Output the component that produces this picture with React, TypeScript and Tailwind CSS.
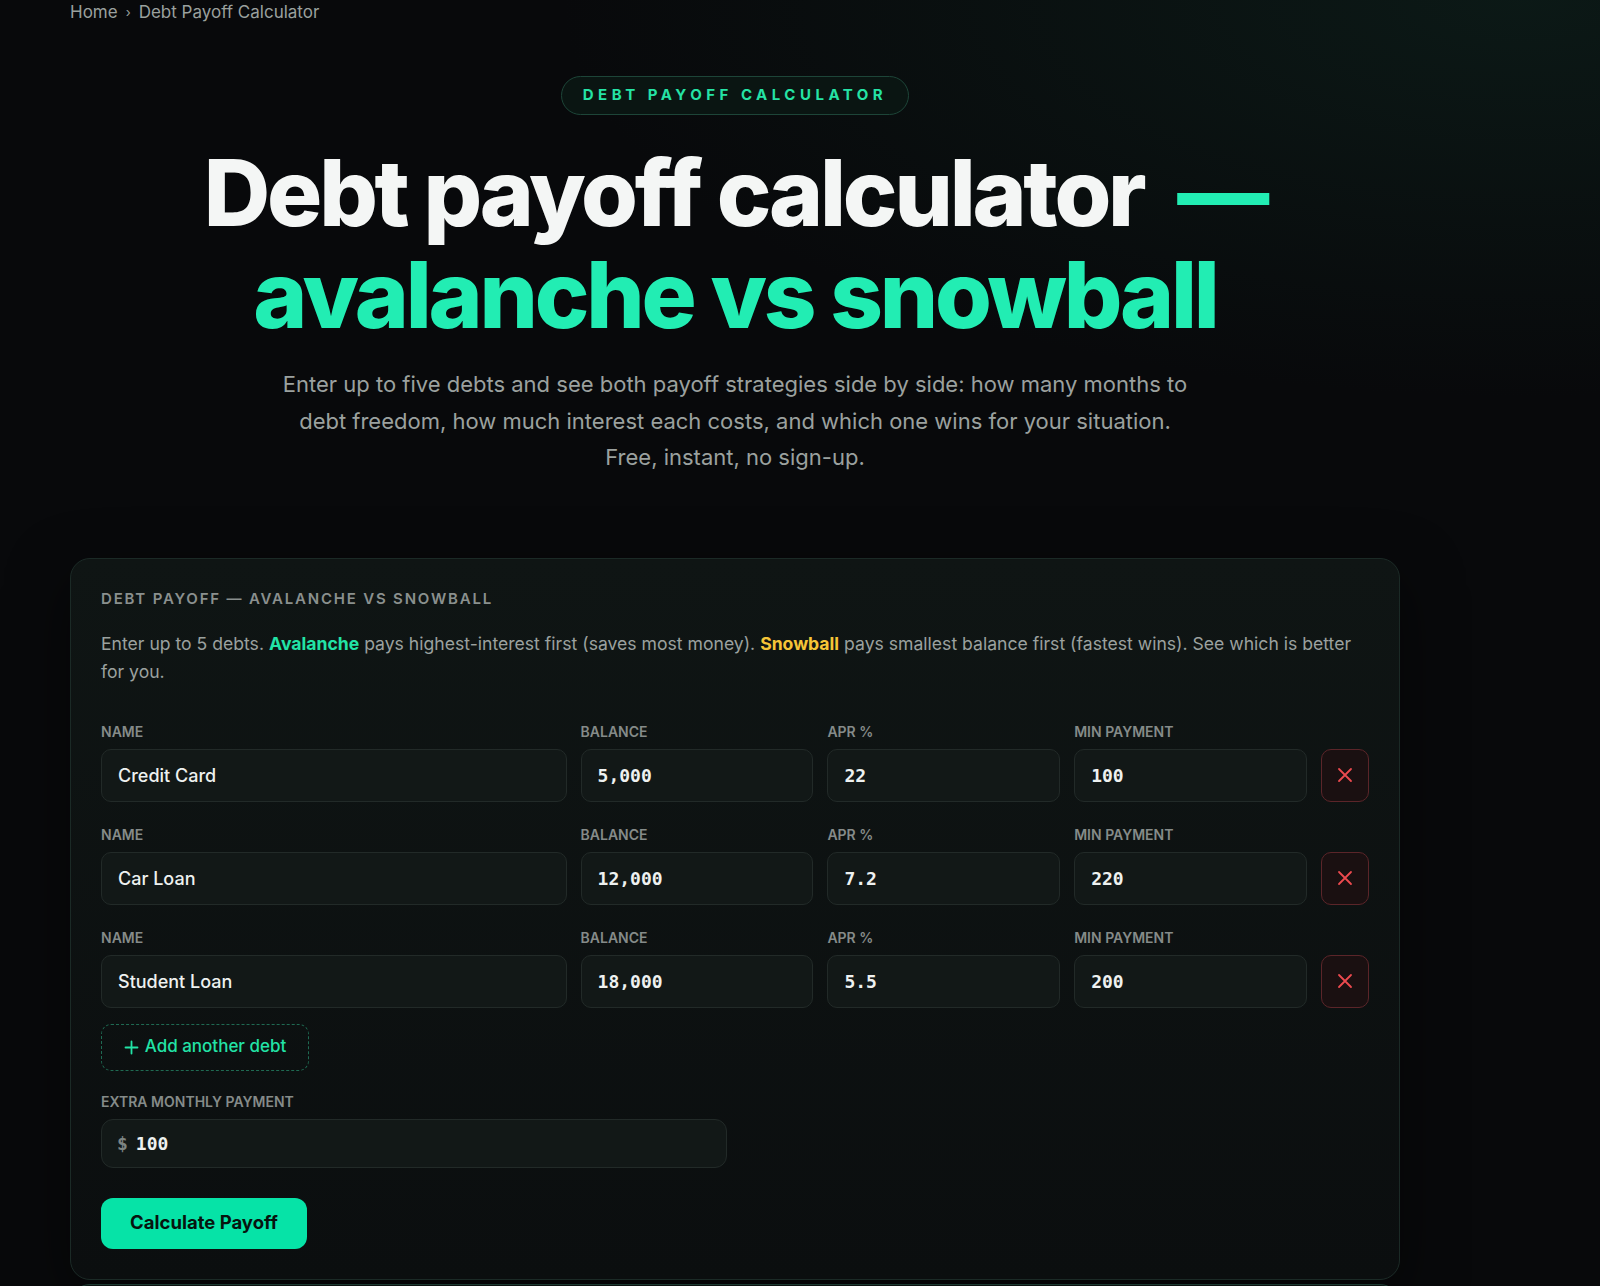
import React from "react";

type Debt = { name: string; balance: string; apr: string; min: string };

const debts: Debt[] = [
  { name: "Credit Card", balance: "5,000", apr: "22", min: "100" },
  { name: "Car Loan", balance: "12,000", apr: "7.2", min: "220" },
  { name: "Student Loan", balance: "18,000", apr: "5.5", min: "200" },
];

const sans = "font-['Inter','Noto_Sans',sans-serif]";
const mono = "font-['DejaVu_Sans_Mono','Liberation_Mono',monospace]";

function FieldLabel({ children }: { children: React.ReactNode }) {
  return (
    <div className="h-[18px] text-[14px] leading-[18px] font-semibold uppercase text-[#858b89] mb-2">
      {children}
    </div>
  );
}

function Field({
  label,
  value,
  monoText,
}: {
  label: string;
  value: string;
  monoText?: boolean;
}) {
  return (
    <div className="flex flex-col min-w-0">
      <FieldLabel>{label}</FieldLabel>
      <div
        className={`h-[53px] flex items-center px-[16px] rounded-[10px] border border-[#222a28] bg-[#121817] text-[#eef1f0] ${
          monoText ? `${mono} text-[18px] font-bold` : "text-[18px] font-medium"
        }`}
      >
        {value}
      </div>
    </div>
  );
}

function DebtRow({ debt }: { debt: Debt }) {
  return (
    <div className="grid grid-cols-[2fr_1fr_1fr_1fr_48px] gap-x-[14px] items-end">
      <Field label="Name" value={debt.name} />
      <Field label="Balance" value={debt.balance} monoText />
      <Field label="APR %" value={debt.apr} monoText />
      <Field label="Min Payment" value={debt.min} monoText />
      <button className="h-[53px] w-[48px] rounded-[10px] border border-[#5b2529] bg-[#1a1011] flex items-center justify-center">
        <svg width="18" height="18" viewBox="0 0 18 18" fill="none">
          <path d="M3 3L15 15M15 3L3 15" stroke="#ec4a4f" strokeWidth="1.8" strokeLinecap="round" />
        </svg>
      </button>
    </div>
  );
}

export default function App() {
  return (
    <div
      className={`${sans} min-h-[1286px] w-full bg-[#08090b] bg-[radial-gradient(ellipse_60%_30%_at_95%_0%,rgba(16,44,36,0.45),transparent)] text-white overflow-hidden`}
    >
      <div className="ml-[70px] w-[1330px]">
        {/* breadcrumb */}
        <nav className="h-[24px] flex items-center gap-[8px] text-[17px] leading-[24px] text-[#9aa09e]">
          <span>Home</span>
          <span className="text-[13px]">›</span>
          <span>Debt Payoff Calculator</span>
        </nav>

        {/* hero */}
        <header className="flex flex-col items-center text-center">
          <div className="mt-[52px] h-[39px] px-[21px] flex items-center rounded-full border border-[#1d4538] bg-[#0a1512] text-[15px] font-bold tracking-[0.3em] text-[#25e3a5]">
            DEBT PAYOFF CALCULATOR
          </div>
          <h1 className="mt-[27px] text-[92px] leading-[102px] font-extrabold tracking-[-0.035em]">
            <span className="text-[#f4f6f5]">Debt payoff calculator&nbsp; </span>
            <span className="text-[#22edb3]">—</span>
            <br />
            <span className="text-[#22edb3]">avalanche vs snowball</span>
          </h1>
          <p className="mt-[20px] text-[22px] leading-[36.5px] text-[#9ba19f]">
            Enter up to five debts and see both payoff strategies side by side: how many months to
            <br />
            debt freedom, how much interest each costs, and which one wins for your situation.
            <br />
            Free, instant, no sign-up.
          </p>
        </header>

        {/* calculator card */}
        <section className="mt-[82px] rounded-[20px] border border-[#1b2a26] bg-[linear-gradient(180deg,#0f1514,#0b0e0f)] shadow-[0_20px_60px_rgba(0,0,0,0.5)] p-[30px]">
          <h2 className="h-[20px] text-[15px] leading-[20px] font-semibold tracking-[0.12em] text-[#8a908e]">
            DEBT PAYOFF — AVALANCHE VS SNOWBALL
          </h2>
          <p className="mt-[21px] text-[17.6px] leading-[28px] text-[#9ba19f]">
            Enter up to 5 debts. <b className="text-[#22e3a6] font-bold">Avalanche</b> pays
            highest-interest first (saves most money).{" "}
            <b className="text-[#f6c537] font-bold">Snowball</b> pays smallest balance first
            (fastest wins). See which is better
            <br />
            for you.
          </p>

          <div className="mt-[37px] flex flex-col gap-y-[24px]">
            {debts.map((d) => (
              <DebtRow key={d.name} debt={d} />
            ))}
          </div>

          <button className="mt-[16px] h-[47px] w-[208px] rounded-[10px] border border-dashed border-[#1f6a52] text-[#22e3a6] text-[17px] font-medium flex items-center justify-center gap-[6px]">
            <svg width="15" height="15" viewBox="0 0 15 15" fill="none">
              <path d="M7.5 1.5V13.5M1.5 7.5H13.5" stroke="#22e3a6" strokeWidth="1.8" strokeLinecap="round" />
            </svg>
            <span>Add another debt</span>
          </button>

          <div className="mt-[22px]">
            <FieldLabel>Extra Monthly Payment</FieldLabel>
            <div className="w-[626px] h-[49px] flex items-center gap-[8px] px-[15px] rounded-[12px] border border-[#222a28] bg-[#121817]">
              <span className={`${mono} text-[18px] font-bold text-[#7d8482]`}>$</span>
              <span className={`${mono} text-[18px] font-bold text-[#eef1f0]`}>100</span>
            </div>
          </div>

          <button className="mt-[30px] h-[51px] w-[206px] rounded-[12px] bg-[#06e3a7] text-[#07140f] text-[18.5px] font-bold">
            Calculate Payoff
          </button>
        </section>

        {/* results card (top edge) */}
        <section className="mt-[4px] h-[40px] rounded-t-[20px] border border-[#1c3a31] bg-[#0d1312]" />
      </div>
    </div>
  );
}
